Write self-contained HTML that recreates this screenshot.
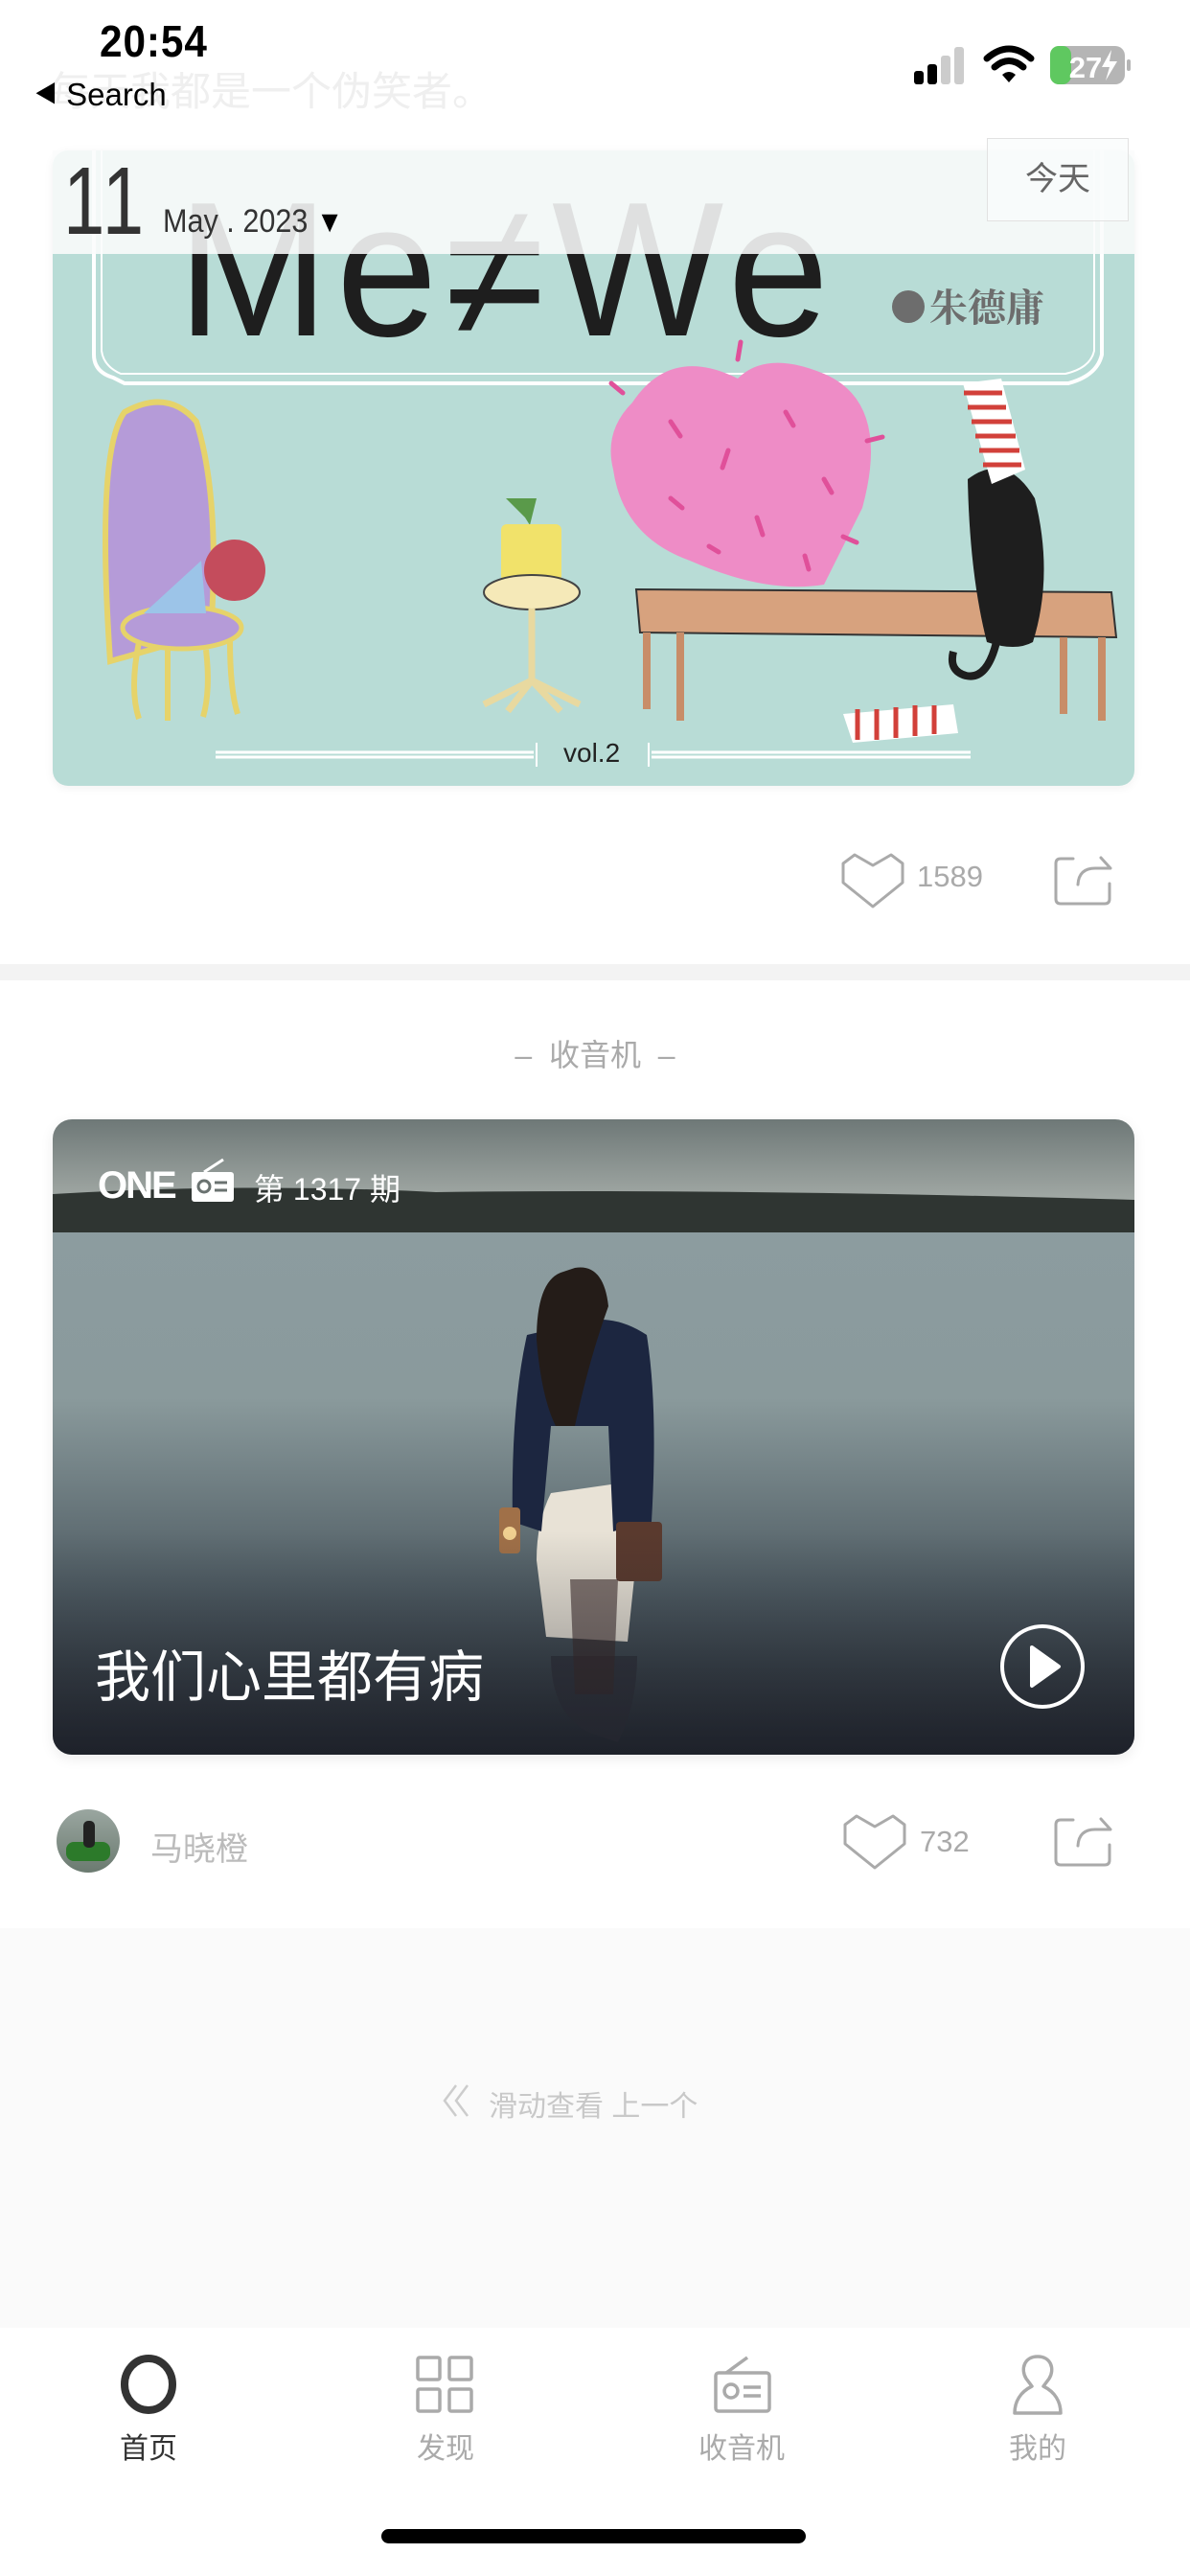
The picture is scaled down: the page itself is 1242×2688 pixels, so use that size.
<!DOCTYPE html>
<html><head><meta charset="utf-8">
<style>
*{margin:0;padding:0;box-sizing:border-box}
body{width:1242px;height:2688px;position:relative;background:#fff;font-family:"Liberation Sans","Noto Sans CJK SC",sans-serif;overflow:hidden}
.abs{position:absolute}
.cj{font-family:"Liberation Sans","Noto Sans CJK SC",sans-serif}
</style></head><body>

<div class="abs cj" style="left:52px;top:62px;font-size:42px;color:#efefef;white-space:nowrap">每天我都是一个伪笑者。</div>

<div class="abs" style="left:104px;top:16px;font-size:46px;font-weight:bold;color:#000;letter-spacing:1px;transform:scaleX(0.92);transform-origin:left">20:54</div>
<div class="abs" style="left:36px;top:80px;font-size:33px;color:#000;white-space:nowrap"><span style="font-size:24px;position:relative;top:-4px">◀</span> Search</div>
<svg class="abs" style="left:950px;top:46px" width="230" height="44" viewBox="0 0 230 44">
 <rect x="4" y="28" width="10" height="14" rx="3" fill="#000"/>
 <rect x="18" y="21" width="10" height="21" rx="3" fill="#000"/>
 <rect x="32" y="12" width="10" height="30" rx="3" fill="#ccc"/>
 <rect x="46" y="3" width="10" height="39" rx="3" fill="#ccc"/>
 <path d="M80 15 Q103 -5 126 15" stroke="#000" stroke-width="7" fill="none" stroke-linecap="round"/>
 <path d="M88 24 Q103 11 118 24" stroke="#000" stroke-width="7" fill="none" stroke-linecap="round"/>
 <path d="M96 32 L103 40 L110 32 Q103 26 96 32Z" fill="#000"/>
 <rect x="146" y="2" width="78" height="40" rx="10" fill="#b5b5b5"/>
 <rect x="146" y="2" width="22" height="40" rx="9" fill="#5fc860"/>
 <rect x="226" y="16" width="4" height="12" rx="2" fill="#b5b5b5"/>
 <text x="183" y="35" font-size="31" font-weight="bold" fill="#fff" text-anchor="middle" font-family="Liberation Sans">27</text>
 <path d="M210 6 L200 24 H208 L204 38 L216 18 H208 Z" fill="#fff"/>
</svg>

<div class="abs" style="left:55px;top:157px;width:1129px;height:663px;border-radius:16px;overflow:hidden;box-shadow:0 2px 10px rgba(0,0,0,0.06)">
<svg width="1129" height="663" viewBox="55 157 1129 663">
 <rect x="55" y="157" width="1129" height="663" fill="#b8dcd6"/>
 <path d="M98 150 V370 Q98 388 118 394 Q130 400 130 400 H1115 Q1145 392 1150 370 V150" stroke="#fff" stroke-width="4" fill="none"/>
 <path d="M106 150 V366 Q108 382 126 390 H1112 Q1138 384 1142 366 V150" stroke="#fff" stroke-width="2" fill="none"/>
 <g transform="translate(185 350) scale(0.95 1)"><text x="0" y="0" font-size="200" font-family="Liberation Sans" fill="#1e1e1e" letter-spacing="8">Me≠We</text></g>
 <circle cx="948" cy="320" r="17" fill="#6d6d6d"/>
 <text x="970" y="335" font-size="40" font-weight="bold" fill="#6d6d6d" font-family="Noto Serif CJK SC,serif">朱德庸</text>
 <path d="M115 690 Q100 470 130 430 Q175 405 205 440 Q230 520 220 660 Z" fill="#b59bd8" stroke="#e6d36a" stroke-width="6"/>
 <ellipse cx="190" cy="655" rx="62" ry="22" fill="#b59bd8" stroke="#e6d36a" stroke-width="5"/>
 <path d="M150 640 L210 585 L215 640 Z" fill="#9cc4e8"/>
 <circle cx="245" cy="595" r="32" fill="#c44c5c"/>
 <path d="M145 670 Q135 720 145 750 M175 678 V752 M215 678 Q220 720 212 748 M240 668 Q240 720 248 745" stroke="#e6d36a" stroke-width="6" fill="none"/>
 <path d="M548 540 L528 520 L560 520 L553 548 Z" fill="#5a9a4a"/>
 <rect x="523" y="547" width="63" height="60" rx="6" fill="#f1e26a"/>
 <ellipse cx="555" cy="618" rx="50" ry="18" fill="#f5e9b8" stroke="#444" stroke-width="2"/>
 <path d="M555 635 V710 M555 710 L505 735 M555 710 L605 735 M555 710 L530 742 M555 710 L585 742" stroke="#e8d9a0" stroke-width="7" fill="none"/>
 <path d="M660 420 Q700 360 770 395 Q800 365 860 390 Q930 420 900 530 L860 610 Q800 620 720 585 Q650 560 640 490 Q630 450 660 420Z" fill="#ee8cc6"/>
 <g stroke="#e0509a" stroke-width="5" stroke-linecap="round"><path d="M700 440 l10 15 M760 470 l-6 18 M820 430 l8 14 M700 520 l12 10 M790 540 l6 18 M860 500 l8 14 M740 570 l10 6 M840 580 l4 14 M650 410 l-12 -10 M770 375 l3 -18 M905 460 l16 -4 M880 560 l14 6"/></g>
 <path d="M664 615 L1160 618 L1165 665 L668 660 Z" fill="#d7a27e" stroke="#333" stroke-width="2"/>
 <path d="M675 660 V740 M710 660 V752 M1110 665 V745 M1150 665 V752" stroke="#c88d68" stroke-width="8"/>
 <path d="M1010 500 Q1050 470 1080 520 Q1100 600 1078 670 Q1060 680 1030 670 Q1012 600 1010 500Z" fill="#1e1e1e"/>
 <path d="M1040 670 Q1030 710 1008 705 Q990 700 995 680" stroke="#1e1e1e" stroke-width="8" fill="none"/>
 <path d="M1005 400 L1045 395 L1070 490 L1035 505 Z" fill="#fff"/>
 <g stroke="#d2403a" stroke-width="5"><path d="M1006 410 h40 M1010 425 h40 M1014 440 h42 M1018 455 h42 M1022 470 h42 M1026 485 h40"/></g>
 <path d="M880 745 L995 735 L1000 765 L890 775 Z" fill="#fff"/>
 <g stroke="#d2403a" stroke-width="5"><path d="M895 740 v32 M915 740 v32 M935 738 v32 M955 736 v32 M975 736 v30"/></g>
 <path d="M225 785 H557 M225 790 H557 M680 785 H1013 M680 790 H1013" stroke="#fff" stroke-width="3"/>
 <path d="M560 775 V800 M677 775 V800" stroke="#fff" stroke-width="2"/>
 <text x="588" y="795" font-size="28" fill="#222" font-family="Liberation Sans">vol.2</text>
</svg>
</div>

<div class="abs" style="left:55px;top:157px;width:1129px;height:108px;background:rgba(250,252,252,0.88)"></div>
<div class="abs" style="left:66px;top:160px;font-size:100px;color:#333;line-height:1;transform:scaleX(0.78);transform-origin:left;letter-spacing:4px">11</div>
<div class="abs" style="left:170px;top:212px;font-size:34px;color:#333;white-space:nowrap;transform:scaleX(0.9);transform-origin:left">May . 2023 <span style="font-size:32px;color:#000">▼</span></div>
<div class="abs cj" style="left:1030px;top:144px;width:148px;height:87px;border:1px solid #e2e2e2;background:rgba(250,252,252,0.75);font-size:34px;color:#666;text-align:center;line-height:85px">今天</div>

<svg class="abs" style="left:878px;top:890px" width="68" height="60" viewBox="0 0 68 60"><path d="M2 11 L14 2 L33 13 L52 2 L64 11 L64 31 L33 56 L2 31 Z" stroke="#aaa" stroke-width="3" fill="none" stroke-linejoin="round"/></svg>
<div class="abs" style="left:957px;top:897px;font-size:31px;color:#aaa">1589</div>
<svg class="abs" style="left:1099px;top:890px" width="64" height="58" viewBox="0 0 64 58"><path d="M21 6 H8 Q3 6 3 11 V48 Q3 53 8 53 H54 Q59 53 59 48 V32 M26 33 Q27 16 44 16 H59 M50 5 L60 16" stroke="#aaa" stroke-width="3" fill="none" stroke-linecap="round" stroke-linejoin="round"/></svg>

<div class="abs" style="left:0;top:1006px;width:1242px;height:17px;background:#f3f3f3"></div>
<div class="abs cj" style="left:0;top:1076px;width:1242px;text-align:center;font-size:32px;color:#aaa">–&nbsp;&nbsp;收音机&nbsp;&nbsp;–</div>

<div class="abs" style="left:55px;top:1168px;width:1129px;height:663px;border-radius:20px;overflow:hidden;box-shadow:0 4px 14px rgba(0,0,0,0.08)">
<svg width="1129" height="663" viewBox="0 0 1129 663">
 <defs>
  <linearGradient id="sky" x1="0" y1="0" x2="0" y2="1"><stop offset="0" stop-color="#6e7877"/><stop offset="1" stop-color="#a5aca8"/></linearGradient>
  <linearGradient id="wat" x1="0" y1="0" x2="0" y2="1"><stop offset="0" stop-color="#8c9ca0"/><stop offset="0.35" stop-color="#8a9a9c"/><stop offset="0.7" stop-color="#4f5c63"/><stop offset="1" stop-color="#22262e"/></linearGradient>
  <linearGradient id="sh" x1="0" y1="0" x2="0" y2="1"><stop offset="0" stop-color="#1a1d26" stop-opacity="0"/><stop offset="1" stop-color="#1a1d26" stop-opacity="0.5"/></linearGradient>
 </defs>
 <rect width="1129" height="90" fill="url(#sky)"/>
 <rect y="90" width="1129" height="573" fill="url(#wat)"/>
 <path d="M0 78 Q200 66 400 76 Q700 72 1129 84 V118 H0 Z" fill="#2f3532"/>
 <path d="M520 390 Q505 420 505 460 L515 540 L600 545 L610 450 Q605 400 590 380 Z" fill="#e8e2d6"/>
 <path d="M560 640 Q520 620 520 560 L610 560 Q610 610 590 650 Z" fill="#2e3038" opacity="0.8"/>
 <path d="M495 225 Q478 300 480 420 L510 430 L520 320 L580 320 L585 430 L625 420 Q632 300 620 225 Q590 205 560 210 Z" fill="#1c2640"/>
 <path d="M530 160 Q505 170 505 230 Q510 290 525 320 L545 320 Q560 250 580 195 Q575 150 545 155Z" fill="#241c18"/>
 <rect x="588" y="420" width="48" height="62" rx="4" fill="#5a3a2e"/>
 <rect x="466" y="405" width="22" height="48" rx="4" fill="#a07048"/>
 <circle cx="477" cy="432" r="7" fill="#f0d090"/>
 <path d="M540 480 L590 480 L585 600 L545 600Z" fill="#3a2a28" opacity="0.6"/>
 <rect x="0" y="430" width="1129" height="233" fill="url(#sh)"/>
 <text x="47" y="82" font-size="40" font-weight="bold" fill="#fff" font-family="Liberation Sans" letter-spacing="-2">ONE</text>
 <rect x="145" y="55" width="44" height="31" rx="3" fill="#fff"/>
 <path d="M158 55 L178 42" stroke="#fff" stroke-width="3"/>
 <circle cx="158" cy="70" r="6" stroke="#6a7270" stroke-width="3" fill="none"/>
 <path d="M169 66 H182 M169 74 H182" stroke="#6a7270" stroke-width="3"/>
 <text x="210" y="84" font-size="32" fill="#fff" font-family="Liberation Sans,Noto Sans CJK SC,sans-serif">第 1317 期</text>
 <text x="44" y="602" font-size="58" fill="#fff" font-family="Liberation Sans,Noto Sans CJK SC,sans-serif">我们心里都有病</text>
 <circle cx="1033" cy="571" r="42" stroke="#fff" stroke-width="4" fill="none"/>
 <path d="M1022 551 L1050 571 L1022 591 Z" fill="#fff" stroke="#fff" stroke-width="4" stroke-linejoin="round"/>
</svg>
</div>

<div class="abs" style="left:59px;top:1888px;width:66px;height:66px;border-radius:50%;overflow:hidden;background:linear-gradient(#9aa6a0,#6b7a70)">
 <div style="position:absolute;left:10px;top:34px;width:46px;height:20px;background:#2c7a2a;border-radius:8px"></div>
 <div style="position:absolute;left:28px;top:12px;width:12px;height:28px;background:#222;border-radius:5px"></div>
</div>
<div class="abs cj" style="left:157px;top:1902px;font-size:34px;color:#bbb">马晓橙</div>
<svg class="abs" style="left:880px;top:1893px" width="68" height="60" viewBox="0 0 68 60"><path d="M2 11 L14 2 L33 13 L52 2 L64 11 L64 31 L33 56 L2 31 Z" stroke="#aaa" stroke-width="3" fill="none" stroke-linejoin="round"/></svg>
<div class="abs" style="left:960px;top:1904px;font-size:31px;color:#aaa">732</div>
<svg class="abs" style="left:1099px;top:1893px" width="64" height="58" viewBox="0 0 64 58"><path d="M21 6 H8 Q3 6 3 11 V48 Q3 53 8 53 H54 Q59 53 59 48 V32 M26 33 Q27 16 44 16 H59 M50 5 L60 16" stroke="#aaa" stroke-width="3" fill="none" stroke-linecap="round" stroke-linejoin="round"/></svg>

<div class="abs" style="left:0;top:2012px;width:1242px;height:417px;background:#fafafa"></div>
<svg class="abs" style="left:458px;top:2172px" width="40" height="40" viewBox="0 0 40 40"><path d="M18 4 L6 20 L18 36 M30 4 L18 20 L30 36" stroke="#ccc" stroke-width="2.5" fill="none"/></svg>
<div class="abs cj" style="left:510px;top:2173px;font-size:30px;color:#c8c8c8;white-space:nowrap">滑动查看 上一个</div>

<div class="abs" style="left:0;top:2429px;width:1242px;height:259px;background:#fff"></div>
<svg class="abs" style="left:123px;top:2456px" width="64" height="64" viewBox="0 0 64 64"><ellipse cx="32" cy="32" rx="25" ry="27" stroke="#333" stroke-width="8" fill="none"/></svg>
<svg class="abs" style="left:434px;top:2458px" width="62" height="62" viewBox="0 0 62 62"><g stroke="#aaa" stroke-width="3.5" fill="none"><rect x="2" y="2" width="23" height="23" rx="2"/><rect x="35" y="2" width="23" height="23" rx="2"/><rect x="2" y="35" width="23" height="23" rx="2"/><rect x="35" y="35" width="23" height="23" rx="2"/></g></svg>
<svg class="abs" style="left:744px;top:2458px" width="62" height="62" viewBox="0 0 62 62"><g stroke="#aaa" stroke-width="3.5" fill="none"><rect x="3" y="18" width="56" height="40" rx="3"/><path d="M14 18 L36 2"/><circle cx="19" cy="37" r="7"/><path d="M32 33 H50 M32 42 H50"/></g></svg>
<svg class="abs" style="left:1055px;top:2456px" width="56" height="66" viewBox="0 0 56 66"><path d="M28 3 C14 3 10 16 16 26 L22 34 C10 40 4 50 4 62 H52 C52 50 46 40 34 34 L40 26 C46 16 42 3 28 3Z" stroke="#aaa" stroke-width="3.5" fill="none" stroke-linejoin="round"/></svg>
<div class="abs cj" style="left:95px;top:2530px;width:120px;text-align:center;font-size:30px;color:#333">首页</div>
<div class="abs cj" style="left:405px;top:2530px;width:120px;text-align:center;font-size:30px;color:#aaa">发现</div>
<div class="abs cj" style="left:704px;top:2530px;width:140px;text-align:center;font-size:30px;color:#aaa">收音机</div>
<div class="abs cj" style="left:1023px;top:2530px;width:120px;text-align:center;font-size:30px;color:#aaa">我的</div>
<div class="abs" style="left:398px;top:2639px;width:443px;height:15px;border-radius:8px;background:#000"></div>

</body></html>
